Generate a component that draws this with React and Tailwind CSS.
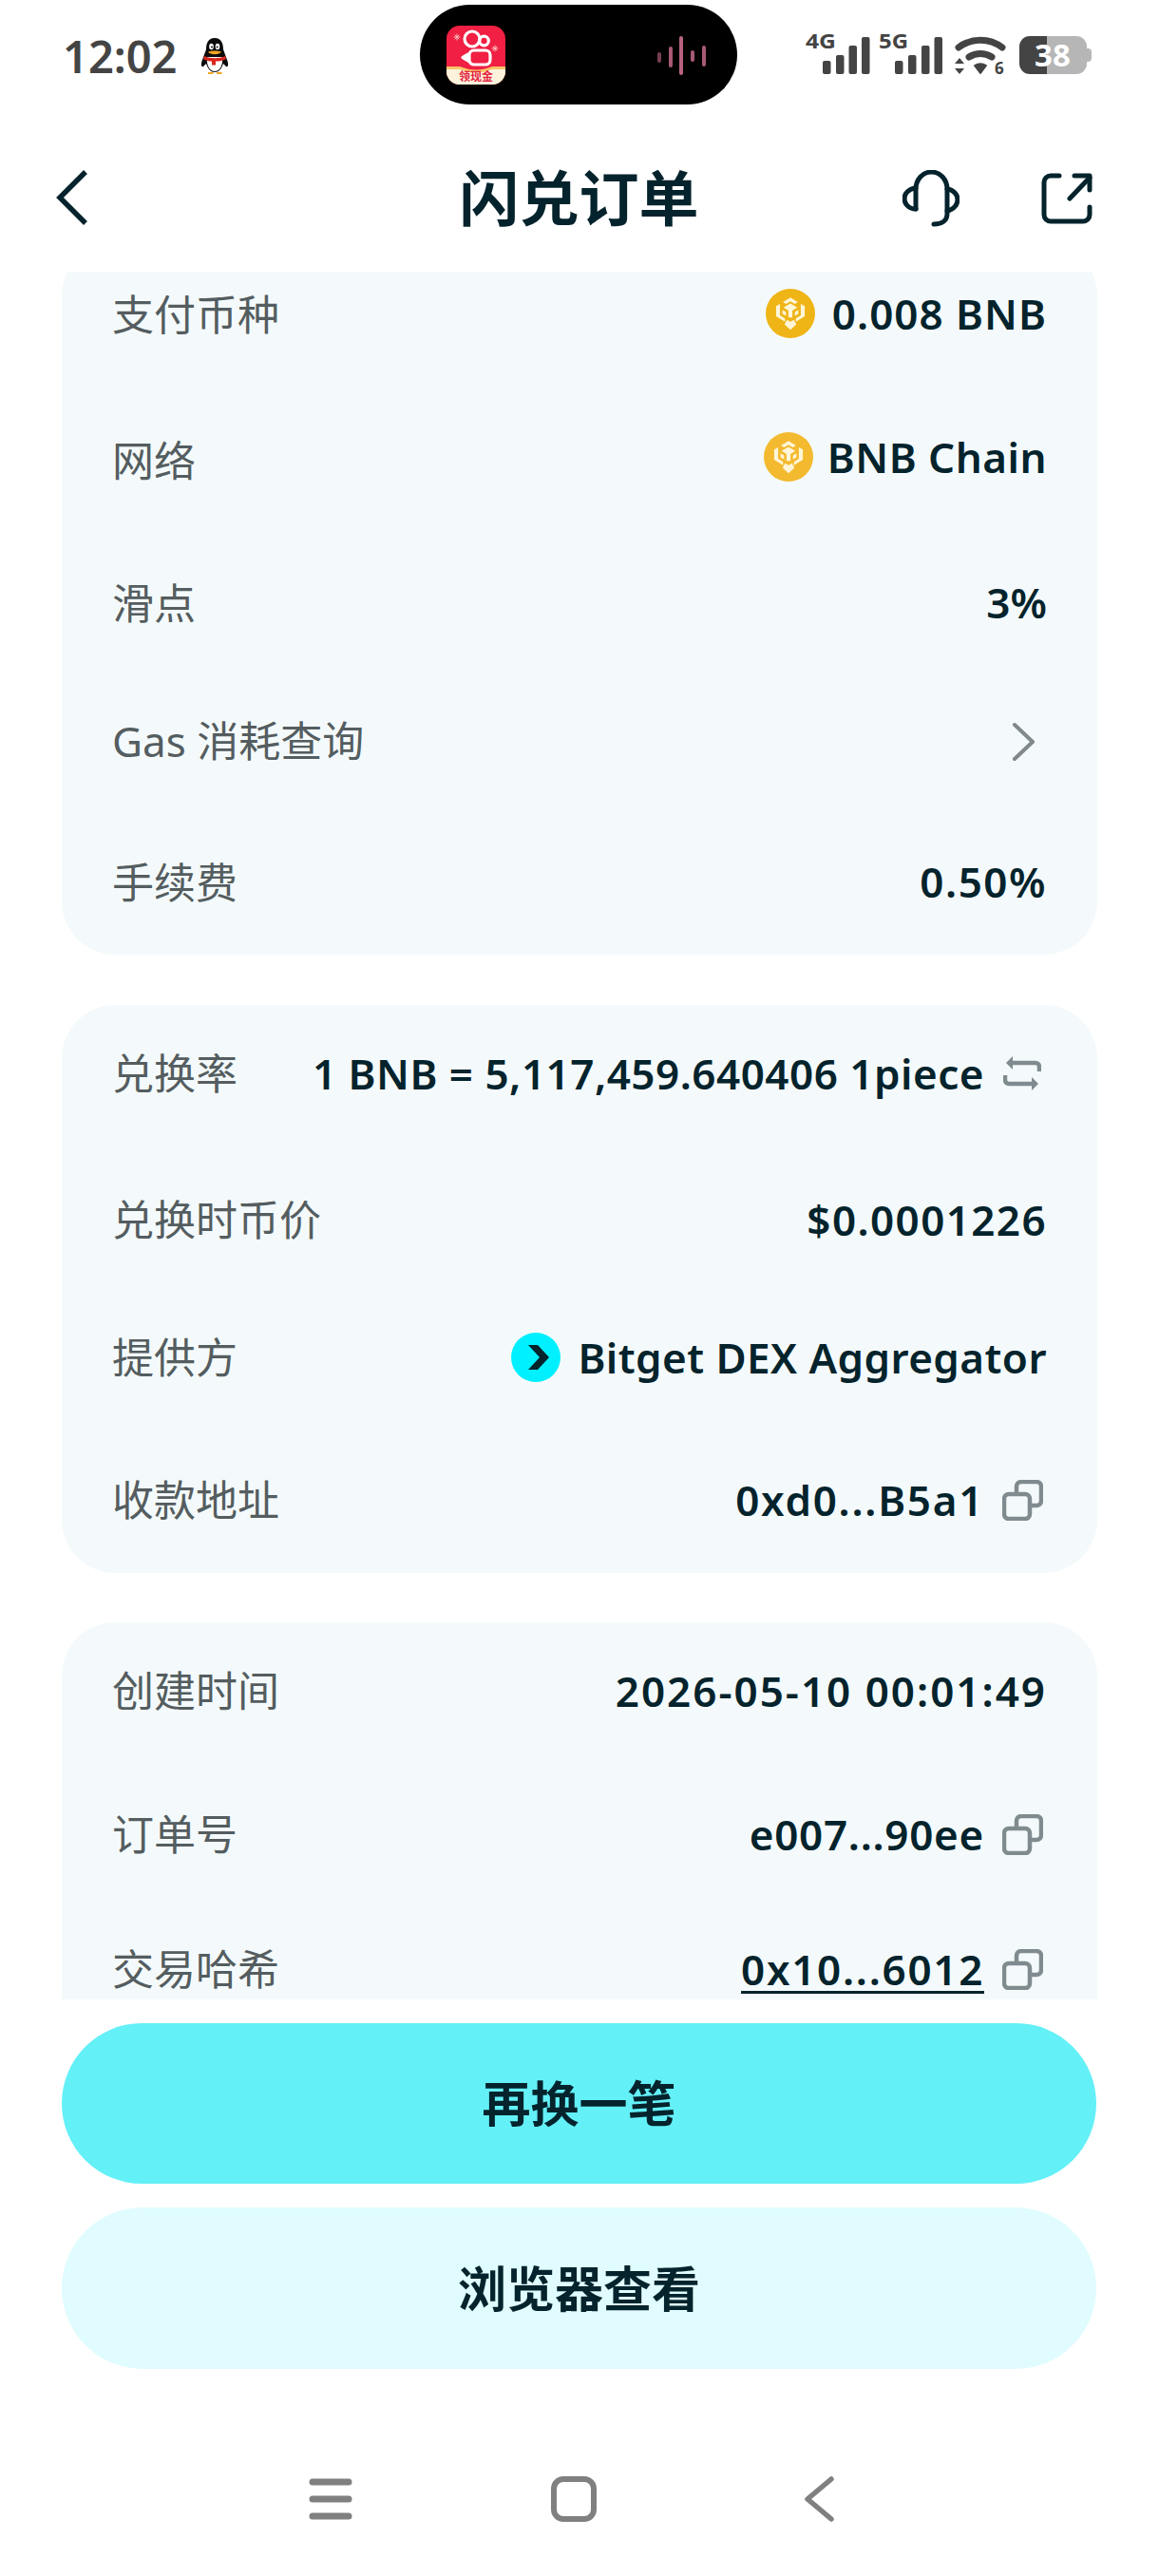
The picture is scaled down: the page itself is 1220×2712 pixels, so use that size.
import React from "react";

const Copy = () => (
  <svg width="43" height="43" viewBox="0 0 43 43" fill="none" stroke="#7f8b8e" strokeWidth="4.500" className="shrink-0">
    <rect x="2" y="15" width="27" height="26" rx="5" />
    <path d="M15 14V7a5 5 0 0 1 5-5h16a5 5 0 0 1 5 5v15a5 5 0 0 1-5 5h-6" />
  </svg>
);

const Bnb = ({ color }) => (
  <svg width="52" height="52" viewBox="0 0 100 100" className="shrink-0">
    <circle cx="50" cy="50" r="50" fill={color} />
    <g fill="#fff6d8">
      <path d="M50 18 L65 27 L59 31 L50 25.500 L41 31 L35 27Z" />
      <path d="M36 38 L50 30 L64 38 L54 44 L54 58 L46 58 L46 44Z" />
      <path d="M21 35 L29 31 L29 54 L39 60 L39 67 L21 56Z" />
      <path d="M79 35 L71 31 L71 54 L61 60 L61 67 L79 56Z" />
      <path d="M34 43 L41 47 L41 55 L34 51Z" />
      <path d="M66 43 L59 47 L59 55 L66 51Z" />
      <path d="M43 63 L50 67 L57 63 L62 72 L50 83 L38 72Z" />
    </g>
  </svg>
);

const Row = ({ label, mt, labelClass = "", valueClass = "", children }) => (
  <div className={`flex h-[100px] items-center justify-between ${mt}`}>
    <span className={`text-[44px] leading-none font-normal text-[#545d60] ${labelClass}`}>{label}</span>
    <div className={`flex items-center text-[44px] leading-none font-semibold text-[#04232c] ${valueClass}`}>{children}</div>
  </div>
);

const Penguin = () => (
  <svg width="32" height="40" viewBox="0 0 32 40" className="ml-[23px]">
    <path d="M16 1C9 1 7 7 7 13L3 24c-2 5-1 8 1 7l3-3c2 6 5 9 9 9s7-3 9-9l3 3c2 1 3-2 1-7L25 13c0-6-2-12-9-12Z" fill="#0b0b0b" />
    <path d="M8 21c-1 9 3 15 8 15s9-6 8-15Z" fill="#fff" />
    <ellipse cx="12.500" cy="10" rx="2.300" ry="3.200" fill="#fff" />
    <ellipse cx="19" cy="10" rx="2.300" ry="3.200" fill="#fff" />
    <circle cx="13" cy="10.500" r="1" fill="#111" />
    <circle cx="18.600" cy="10.500" r="1" fill="#111" />
    <path d="M9 15.500c3-1.500 11-1.500 14 0-2 3.500-12 3.500-14 0Z" fill="#f5a623" />
    <path d="M5 20c6 3 16 3 22 0l1 3c-4 2-6 2.500-11 2.500v4h-4v-4c-3 0-6-.5-9-2.500Z" fill="#d8261c" />
    <path d="M9 37h6l-1 2H9ZM18 37h6l-1 2h-5Z" fill="#f5a623" />
  </svg>
);

const AppIcon = () => (
  <div className="relative h-[62px] w-[62px] overflow-hidden rounded-[14px] bg-[#f01f43]">
    <svg width="62" height="62" viewBox="0 0 62 62" className="absolute left-0 top-0">
      <g fill="none" stroke="#fff" strokeWidth="3.200">
        <circle cx="27" cy="14" r="8" />
        <circle cx="39.500" cy="16" r="4.800" />
        <rect x="24" y="26" width="22" height="15" rx="5" />
        <path d="M23 30 L17 33.500 L23 37Z" strokeLinejoin="round" fill="#fff" />
      </g>
      <g stroke="#fbb" strokeWidth="1" strokeLinecap="round">
        <path d="M8 12h6M11 9v6M9 10l4 4M13 10l-4 4" />
        <path d="M48 24h6M51 21v6M49 22l4 4M53 22l-4 4" />
      </g>
      <path d="M0 43 L14 43 Q31 50 48 43 L62 43 L62 62 L0 62Z" fill="#f9c46a" />
      <path d="M0 46 L14 46 Q31 53 48 46 L62 46 L62 62 L0 62Z" fill="#fdf3dc" />
    </svg>
    <span className="absolute bottom-[2px] left-0 w-full text-center text-[12px] leading-[13px] font-bold whitespace-nowrap text-[#e3223f]">领现金</span>
  </div>
);

const StatusRight = () => (
  <svg width="306" height="62" viewBox="0 -12 306 62" className="font-['Noto_Sans']">
    <g fill="#444">
      <text x="0" y="19" fontSize="22" fontWeight="700" textLength="32" lengthAdjust="spacingAndGlyphs">4G</text>
      <rect x="18" y="32" width="8.500" height="14" rx="2" />
      <rect x="32" y="26" width="8.500" height="20" rx="2" />
      <rect x="45.500" y="16" width="8.500" height="30" rx="2" />
      <rect x="59" y="7" width="8.500" height="39" rx="2" />
      <text x="77" y="19" fontSize="22" fontWeight="700" textLength="31" lengthAdjust="spacingAndGlyphs">5G</text>
      <rect x="94" y="32" width="8.500" height="14" rx="2" />
      <rect x="108" y="26" width="8.500" height="20" rx="2" />
      <rect x="122" y="16" width="8.500" height="30" rx="2" />
      <rect x="135.500" y="7" width="8.500" height="39" rx="2" />
      <path d="M161 18a38 38 0 0 1 46 0" fill="none" stroke="#444" strokeWidth="7" strokeLinecap="round" />
      <path d="M172 28a22 22 0 0 1 24 0" fill="none" stroke="#444" strokeWidth="7" strokeLinecap="round" />
      <path d="M178 37a12 12 0 0 1 12 0L184 45Z" stroke="#444" strokeWidth="2" strokeLinejoin="round" />
      <path d="M162 29l5 6h-10ZM162 46l5-6h-10Z" />
      <text x="199" y="46" fontSize="17" fontWeight="700">6</text>
      <path d="M236 6h18v40h-18a11 11 0 0 1-11-11V17a11 11 0 0 1 11-11Z" />
      <path d="M254 6h31a11 11 0 0 1 11 11v18a11 11 0 0 1-11 11h-31Z" fill="#b6b6b6" />
      <path d="M296 19h1a4 4 0 0 1 4 4v6a4 4 0 0 1-4 4h-1Z" fill="#b6b6b6" />
    </g>
    <text x="260" y="38" textAnchor="middle" fontSize="33" fontWeight="700" fill="#fff">38</text>
  </svg>
);

export default function App() {
  return (
    <div className="h-[2712px] w-[1220px] overflow-hidden bg-white font-['Noto_Sans','Noto_Sans_CJK_SC',sans-serif]">
      {/* status bar */}
      <div className="flex h-[150px] items-start">
        <div className="flex h-[110px] w-[442px] items-center pt-[8px] pl-[66px]">
          <span className="text-[47px] leading-none font-semibold text-[#444]">12:02</span>
          <Penguin />
        </div>
        <div className="mt-[5px] flex h-[105px] w-[334px] items-center justify-between rounded-full bg-black pl-[28px] pr-[32px]">
          <AppIcon />
          <svg width="52" height="42" viewBox="0 0 52 42" fill="none" strokeWidth="4" strokeLinecap="round" stroke="#a85a72">
            <path d="M2 20v7" opacity=".7" />
            <path d="M14 14v18" />
            <path d="M25 3v37" stroke="#b8637e" />
            <path d="M37 18v8" />
            <path d="M49 13v18" />
          </svg>
        </div>
        <div className="ml-[72px] mt-[20px]">
          <StatusRight />
        </div>
      </div>

      {/* header */}
      <div className="flex h-[136px] items-center pb-[22px] px-[59px] text-[#04232c]">
        <div className="flex-1 pt-[2px]">
          <svg width="34" height="58" viewBox="0 0 34 58" fill="none" stroke="#04232c" strokeWidth="5.500" className="block">
            <path d="M31 2 L4 29 L31 56" />
          </svg>
        </div>
        <span className="ml-[10px] text-[63px] leading-none font-bold">闪兑订单</span>
        <div className="flex flex-1 items-center justify-end gap-[86px] pr-[11px] pt-[4px]">
          <svg width="60" height="60" viewBox="0 0 60 60" fill="none" stroke="#04232c" strokeWidth="5" strokeLinecap="round">
            <path d="M14 41V20a16.500 18 0 0 1 33 0v26c0 7-5 11-14 11" />
            <path d="M14 19C6 20 2 25 2 30S6 41 14 41" />
            <path d="M47 20c7 1 11 6 11 11s-4 11-11 12" />
          </svg>
          <svg width="54" height="54" viewBox="0 0 54 54" fill="none" stroke="#04232c" strokeWidth="5" strokeLinecap="round" strokeLinejoin="round">
            <path d="M19 3H10a7 7 0 0 0-7 7v34a7 7 0 0 0 7 7h34a7 7 0 0 0 7-7V36" />
            <path d="M30 27L51 5" />
            <path d="M35 3h16v15" />
          </svg>
        </div>
      </div>

      {/* scroll area */}
      <div className="h-[1819px] overflow-hidden px-[65px]">
        <div className="-mt-[31px] rounded-[56px] bg-[#f4fafb] px-[53px] pt-[26px] pb-[26px]">
          <Row label="支付币种" mt="" valueClass="pb-[2px]">
            <Bnb color="#efb416" />
            <span className="ml-[18px] tracking-[1px]">0.008 BNB</span>
          </Row>
          <Row label="网络" mt="mt-[52px]" labelClass="pt-[3px]" valueClass="pb-[4px]">
            <Bnb color="#f3ba2f" />
            <span className="ml-[15px] tracking-[0.5px]">BNB Chain</span>
          </Row>
          <Row label="滑点" mt="mt-[52px]" valueClass="pb-[2px]">
            <span>3%</span>
          </Row>
          <Row label="Gas 消耗查询" mt="mt-[46px]" labelClass="pb-[2px]">
            <svg width="25" height="42" viewBox="0 0 25 42" fill="none" stroke="#80898c" strokeWidth="4" strokeLinecap="round" strokeLinejoin="round" className="mr-[12px]">
              <path d="M3 3 L22 21 L3 39" />
            </svg>
          </Row>
          <Row label="手续费" mt="mt-[48px]" valueClass="pb-[2px]">
            <span className="tracking-[1.5px]">0.50%</span>
          </Row>
        </div>

        <div className="mt-[53px] rounded-[56px] bg-[#f4fafb] px-[53px] pt-[22px] pb-[27px]">
          <Row label="兑换率" mt="">
            <span className="tracking-[0.5px]">1 BNB = 5,117,459.640406 1piece</span>
            <svg width="40" height="40" viewBox="0 0 40 40" fill="none" stroke="#7f8b8e" strokeWidth="4.500" className="ml-[20px] mr-[6px] shrink-0" strokeLinejoin="round">
              <path d="M38 18V13a4 4 0 0 0-4-4H8" />
              <path d="M10 2L3 9l7 7Z" fill="#7f8b8e" stroke="none" />
              <path d="M2 22v5a4 4 0 0 0 4 4h26" />
              <path d="M30 24l7 7-7 7Z" fill="#7f8b8e" stroke="none" />
            </svg>
          </Row>
          <Row label="兑换时币价" mt="mt-[54px]">
            <span className="tracking-[1.4px]">$0.0001226</span>
          </Row>
          <Row label="提供方" mt="mt-[45px]">
            <svg width="52" height="52" viewBox="0 0 52 52" className="shrink-0">
              <circle cx="26" cy="26" r="26" fill="#00f0ff" />
              <path d="M18 13h10l12 13-12 13H18l12-13Z" fill="#04232c" />
            </svg>
            <span className="ml-[18px] tracking-[0.45px]">Bitget DEX Aggregator</span>
          </Row>
          <Row label="收款地址" mt="mt-[50px]">
            <span className="tracking-[1.7px]">0xd0...B5a1</span>
            <span className="ml-[19px] mr-[4px] flex"><Copy /></span>
          </Row>
        </div>

        <div className="mt-[52px] rounded-[56px] bg-[#f4fafb] px-[53px] pt-[22px] pb-[40px]">
          <Row label="创建时间" mt="">
            <span className="tracking-[2px]">2026-05-10 00:01:49</span>
          </Row>
          <Row label="订单号" mt="mt-[51px]">
            <span className="tracking-[0.7px]">e007...90ee</span>
            <span className="ml-[19px] mr-[4px] flex"><Copy /></span>
          </Row>
          <Row label="交易哈希" mt="mt-[42px]">
            <span className="tracking-[1.7px] underline decoration-[3px] underline-offset-[6px]">0x10...6012</span>
            <span className="ml-[19px] mr-[4px] flex"><Copy /></span>
          </Row>
        </div>
      </div>

      {/* buttons */}
      <div className="mt-[25px] flex flex-col gap-[25px] pl-[65px] pr-[66px]">
        <div className="flex h-[169px] items-center justify-center rounded-full bg-[#63f0f7] text-[51px] leading-none font-bold text-[#04232c]">再换一笔</div>
        <div className="flex h-[170px] items-center justify-center rounded-full bg-[#e0fcfe] text-[51px] leading-none font-bold text-[#04232c]">浏览器查看</div>
      </div>

      {/* nav */}
      <div className="mt-[113px] flex items-start pl-[325px]">
        <svg width="46" height="48" viewBox="0 0 46 48" fill="none" stroke="#808080" strokeWidth="7" strokeLinecap="round">
          <path d="M4 6H42M4 24H42M4 42H42" />
        </svg>
        <svg width="48" height="48" viewBox="0 0 48 48" fill="none" stroke="#808080" strokeWidth="6" className="ml-[209px]">
          <rect x="3" y="3" width="42" height="42" rx="10" />
        </svg>
        <svg width="32" height="48" viewBox="0 0 32 48" fill="none" stroke="#808080" strokeWidth="5.500" strokeLinecap="round" strokeLinejoin="round" className="ml-[218px]">
          <path d="M29 3 L4 24 L29 45" />
        </svg>
      </div>
    </div>
  );
}
